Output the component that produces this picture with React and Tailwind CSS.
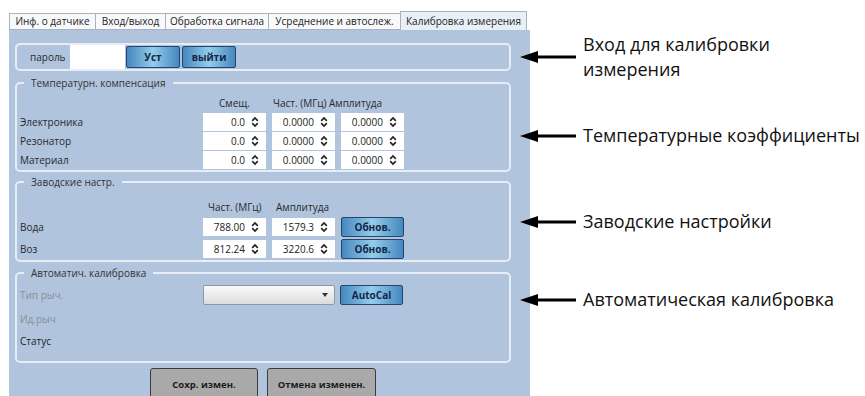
import React from 'react';

const ui = { fontFamily: '"Open Sans", "Liberation Sans", sans-serif' };

const Spin = () => (
  <svg width="8" height="12" viewBox="0 0 8 12" className="shrink-0">
    <path d="M1.2 4.8 L4 2 L6.8 4.8" fill="none" stroke="#222" strokeWidth="1.7" />
    <path d="M1.2 7.2 L4 10 L6.8 7.2" fill="none" stroke="#222" strokeWidth="1.7" />
  </svg>
);

const NumBox = ({ value, w = 'w-[63px]' }) => (
  <div className={`${w} h-[18px] bg-white flex items-center justify-end pr-[7px] gap-[6px] text-[10px] text-[#222]`}>
    <span>{value}</span>
    <Spin />
  </div>
);

const BlueBtn = ({ children, w = 'w-[63px]', h = 'h-[20px]' }) => (
  <button className={`${w} ${h} rounded-[2px] border border-[#23456e] bg-gradient-to-r from-[#4587bf] via-[#94cdea] to-[#4587bf] text-[10px] font-bold text-[#14264a] flex items-center justify-center`}>
    {children}
  </button>
);

const Group = ({ title, children, className = '' }) => (
  <fieldset className={`border-2 border-[#e6edf6] rounded-[5px] ${className}`}>
    <legend className="ml-[4px] px-[7px] text-[10px] leading-[12px] text-[#333]">{title}</legend>
    {children}
  </fieldset>
);

const Arrow = () => (
  <svg width="57" height="14" viewBox="0 0 57 14" className="shrink-0">
    <polygon points="0,7 18,1 18,13" fill="#000" />
    <rect x="16" y="5.5" width="40" height="3" fill="#000" />
  </svg>
);

const tabs = [
  ['Инф. о датчике', 'w-[86px]'],
  ['Вход/выход', 'w-[70px]'],
  ['Обработка сигнала', 'w-[103px]'],
  ['Усреднение и автослеж.', 'w-[132px]'],
];

const tempRows = ['Электроника', 'Резонатор', 'Материал'];

export default function App() {
  return (
    <div className="w-[865px] h-[396px] bg-white flex overflow-hidden" style={ui}>
      {/* window */}
      <div className="ml-[9px] mt-[12px] w-[521px] flex flex-col shrink-0">
        <div className="flex items-end h-[18px] text-[10px] text-[#222]">
          {tabs.map(([t, w]) => (
            <div key={t} className={`${w} h-[17px] border border-r-0 border-[#a9b2bd] bg-[#f8f9fb] flex items-center justify-center whitespace-nowrap`}>
              {t}
            </div>
          ))}
          <div className="w-[127px] h-[19px] border border-[#a9b2bd] border-b-0 bg-[#e9eff6] flex items-center justify-center whitespace-nowrap">
            Калибровка измерения
          </div>
        </div>

        <div className="h-[366px] bg-[#b0c4de] px-[6px] flex flex-col text-[10px] text-[#2a2a2a]">
          {/* login */}
          <div className="mt-[13px] w-[496px] h-[28px] border-2 border-[#e6edf6] rounded-[5px] flex items-center pl-[13px]">
            <span className="w-[40px]">пароль</span>
            <div className="w-[55px] h-[24px] bg-white" />
            <div className="flex gap-[2px] ml-[1px]">
              <BlueBtn w="w-[54px]" h="h-[22px]">Уст</BlueBtn>
              <BlueBtn w="w-[54px]" h="h-[22px]">выйти</BlueBtn>
            </div>
          </div>

          {/* temperature */}
          <Group title="Температурн. компенсация" className="mt-[6px] w-[496px] pt-[8px] pb-[1px] pl-[3px]">
            <div className="relative h-[12px] leading-[12px] mb-[4px]">
              <span className="absolute left-[199px]">Смещ.</span>
              <span className="absolute left-[253px]">Част. (МГц)</span>
              <span className="absolute left-[309px]">Амплитуда</span>
            </div>
            <div className="flex flex-col gap-[1px]">
              {tempRows.map((r) => (
                <div key={r} className="flex items-center h-[18px]">
                  <span className="w-[183px]">{r}</span>
                  <div className="flex gap-[6px]">
                    <NumBox value="0.0" />
                    <NumBox value="0.0000" />
                    <NumBox value="0.0000" />
                  </div>
                </div>
              ))}
            </div>
          </Group>

          {/* factory */}
          <Group title="Заводские настр." className="mt-[4px] w-[496px] pt-[13px] pb-[1px] pl-[3px]">
            <div className="relative h-[12px] leading-[12px] mb-[4px]">
              <span className="absolute left-[188px]">Част. (МГц)</span>
              <span className="absolute left-[256px]">Амплитуда</span>
            </div>
            <div className="flex flex-col gap-[2px]">
              {[
                ['Вода', '788.00', '1579.3'],
                ['Воз', '812.24', '3220.6'],
              ].map(([n, f, a]) => (
                <div key={n} className="flex items-center h-[20px]">
                  <span className="w-[183px]">{n}</span>
                  <div className="flex gap-[6px] items-center">
                    <NumBox value={f} />
                    <NumBox value={a} />
                    <BlueBtn>Обнов.</BlueBtn>
                  </div>
                </div>
              ))}
            </div>
          </Group>

          {/* auto */}
          <Group title="Автоматич. калибровка" className="mt-[5px] w-[496px] pt-[6px] pb-[10px] pl-[3px]">
            <div className="flex items-center h-[20px]">
              <span className="w-[183px] text-[#8a8f98]">Тип рыч.</span>
              <div className="w-[132px] h-[20px] rounded-[2px] border border-[#8e98a4] bg-gradient-to-b from-[#fafafa] to-[#dcdcdc] flex items-center justify-end pr-[6px]">
                <svg width="6" height="4" viewBox="0 0 6 4">
                  <polygon points="0,0 6,0 3,4" fill="#333" />
                </svg>
              </div>
              <div className="ml-[5px]">
                <BlueBtn>AutoCal</BlueBtn>
              </div>
            </div>
            <div className="flex items-center h-[20px] mt-[4px] text-[#8a8f98]">Ид.рыч</div>
            <div className="flex items-center h-[20px] mt-[2px] text-[#1e1e1e]">Статус</div>
          </Group>

          <div className="mt-[5px] ml-[135px] flex gap-[9px]">
            <button className="w-[108px] h-[34px] rounded-t-[3px] border border-[#3c3c3c] bg-[#a9a9a9] text-[9.5px] font-bold text-[#1c1c1c]">
              Сохр. измен.
            </button>
            <button className="w-[109px] h-[34px] rounded-t-[3px] border border-[#3c3c3c] bg-[#a9a9a9] text-[9.5px] font-bold text-[#1c1c1c]">
              Отмена изменен.
            </button>
          </div>
        </div>
      </div>

      {/* annotations */}
      <div className="-ml-[10px] relative flex flex-col pt-[32px] text-[18px] text-[#111] leading-[25px]">
        <div className="flex items-center gap-[6px]">
          <Arrow />
          <div>
            <div>Вход для калибровки</div>
            <div>измерения</div>
          </div>
        </div>
        <div className="flex items-center gap-[6px] mt-[41px]">
          <Arrow />
          <div className="whitespace-nowrap">Температурные коэффициенты</div>
        </div>
        <div className="flex items-center gap-[6px] mt-[61px]">
          <Arrow />
          <div>Заводские настройки</div>
        </div>
        <div className="flex items-center gap-[6px] mt-[53px]">
          <Arrow />
          <div>Автоматическая калибровка</div>
        </div>
      </div>
    </div>
  );
}
